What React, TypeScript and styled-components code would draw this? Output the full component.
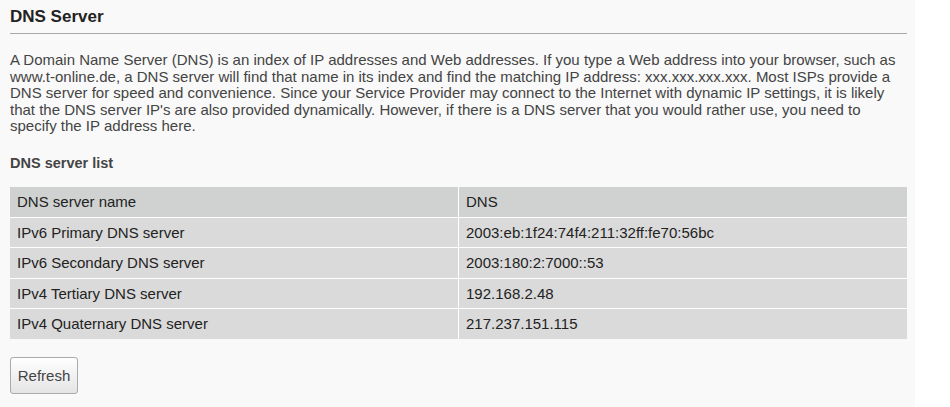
import styled, { createGlobalStyle } from 'styled-components';

const GlobalStyle = createGlobalStyle`
  html, body {
    margin: 0;
    padding: 0;
    background: #ffffff;
  }
  body {
    font-family: "Liberation Sans", Arial, sans-serif;
    color: #333;
  }
`;

const Panel = styled.section`
  width: 915px;
  min-height: 407px;
  box-sizing: border-box;
  background: #f9f9f9;
  padding: 8px 8px 12px 10px;
`;

const Title = styled.h2`
  margin: 0;
  padding: 0 0 8px 0;
  font-size: 17px;
  line-height: 17px;
  font-weight: bold;
  color: #222;
  border-bottom: 1px solid #a8a8a8;
`;

const Intro = styled.p`
  margin: 18px 0 0 0;
  font-size: 15px;
  line-height: 16.6px;
  color: #444;
`;

const SubTitle = styled.h3`
  margin: 20px 0 0 0;
  font-size: 14.5px;
  line-height: 16px;
  font-weight: bold;
  color: #444;
`;

const Table = styled.table`
  width: 897px;
  margin-top: 16px;
  border-collapse: collapse;
  table-layout: fixed;
  font-size: 15px;
`;

const Cell = styled.td<{ $head?: boolean }>`
  height: 30.4px;
  box-sizing: border-box;
  padding: 0 7px;
  line-height: 17px;
  color: #222;
  background: ${(p) => (p.$head ? '#cfd2d1' : '#dadada')};
  border: 1px solid #ffffff;
  border-top: none;
  border-left: none;
  text-align: left;
  font-weight: normal;

  &:last-child {
    border-right: none;
  }
`;

const Row = styled.tr`
  &:last-child td {
    border-bottom: none;
  }
`;

const Button = styled.button`
  margin-top: 18px;
  width: 68px;
  height: 37px;
  padding: 0;
  font-family: "Liberation Sans", Arial, sans-serif;
  font-size: 15px;
  color: #444;
  border: 1px solid #aaa;
  border-radius: 3px;
  background: linear-gradient(#ffffff, #e4e4e4);
  cursor: pointer;
`;

const servers = [
  { name: 'IPv6 Primary DNS server', dns: '2003:eb:1f24:74f4:211:32ff:fe70:56bc' },
  { name: 'IPv6 Secondary DNS server', dns: '2003:180:2:7000::53' },
  { name: 'IPv4 Tertiary DNS server', dns: '192.168.2.48' },
  { name: 'IPv4 Quaternary DNS server', dns: '217.237.151.115' },
];

export default function App() {
  return (
    <>
      <GlobalStyle />
      <Panel>
        <Title>DNS Server</Title>
        <Intro>
          A Domain Name Server (DNS) is an index of IP addresses and Web addresses. If you type a Web
          address into your browser, such as www.t-online.de, a DNS server will find that name in its
          index and find the matching IP address: xxx.xxx.xxx.xxx. Most ISPs provide a DNS server for
          speed and convenience. Since your Service Provider may connect to the Internet with dynamic
          IP settings, it is likely that the DNS server IP's are also provided dynamically. However, if
          there is a DNS server that you would rather use, you need to specify the IP address here.
        </Intro>
        <SubTitle>DNS server list</SubTitle>
        <Table>
          <thead>
            <Row>
              <Cell as="th" $head>DNS server name</Cell>
              <Cell as="th" $head>DNS</Cell>
            </Row>
          </thead>
          <tbody>
            {servers.map((s) => (
              <Row key={s.name}>
                <Cell>{s.name}</Cell>
                <Cell>{s.dns}</Cell>
              </Row>
            ))}
          </tbody>
        </Table>
        <Button type="button">Refresh</Button>
      </Panel>
    </>
  );
}
